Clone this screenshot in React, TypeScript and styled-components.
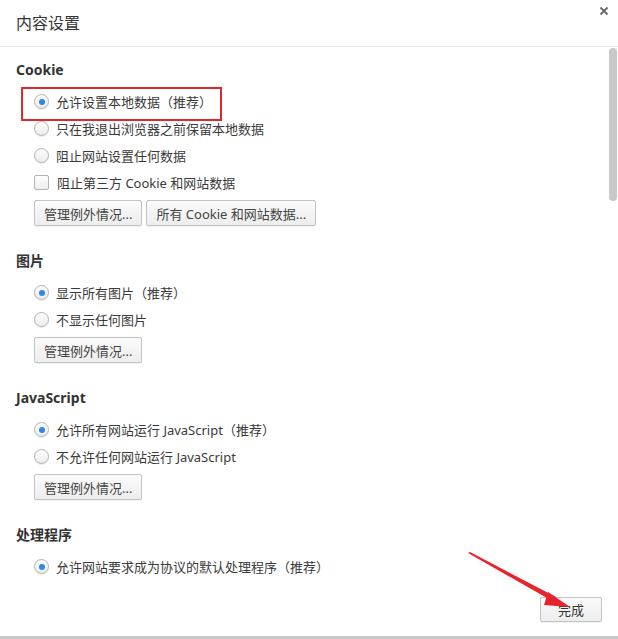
import React from "react";
import styled, { createGlobalStyle, css } from "styled-components";

const Global = createGlobalStyle`
  html, body { margin: 0; padding: 0; background: #fff; }
  body { font-family: "Noto Sans", "Noto Sans CJK SC", sans-serif; color: #333; }
  * { box-sizing: border-box; }
`;

const Dialog = styled.div`
  position: relative;
  width: 618px;
  height: 639px;
  display: flex;
  flex-direction: column;
  background: #fff;
  border-bottom: 3px solid #c9c9c9;
  overflow: hidden;
`;

const Header = styled.div`
  height: 47px;
  flex: none;
  display: flex;
  align-items: center;
  padding: 0 16px 2px;
  border-bottom: 1px solid #eaeaea;
`;

const Title = styled.h1`
  margin: 0;
  font-size: 16px;
  font-weight: 400;
  color: #333;
  font-family: "Noto Sans CJK SC", sans-serif;
`;

const Close = styled.button`
  position: absolute;
  top: 5px;
  right: 8px;
  width: 12px;
  height: 12px;
  padding: 0;
  border: none;
  background: none;
  display: flex;
  align-items: center;
  justify-content: center;
`;

const Body = styled.div`
  position: relative;
  flex: 1;
  overflow: hidden;
`;

const Content = styled.div`
  padding: 13px 16px 0;
  display: flex;
  flex-direction: column;
  gap: 25px;
`;

const Thumb = styled.div`
  position: absolute;
  top: 1px;
  right: 1px;
  width: 8px;
  height: 153px;
  border-radius: 4px;
  background: #c9c9c9;
`;

const Section = styled.section`
  display: flex;
  flex-direction: column;
`;

const Heading = styled.h2`
  margin: 0 0 8px;
  font-size: 14px;
  line-height: 20px;
  font-weight: 700;
  color: #333;
  font-family: "Noto Sans", "Noto Sans CJK SC", sans-serif;
`;

const Options = styled.div`
  display: flex;
  flex-direction: column;
  padding-left: 18px;
`;

const Option = styled.label<{ $highlight?: boolean }>`
  position: relative;
  height: 27px;
  display: flex;
  align-items: center;
  gap: 7px;
  font-size: 13px;
  color: #3a3a3a;
  font-family: "Noto Sans", "Noto Sans CJK SC", sans-serif;
  ${(p) =>
    p.$highlight &&
    css`
      &::after {
        content: "";
        position: absolute;
        left: -13px;
        top: -1px;
        width: 197px;
        height: 30px;
        border: 2px solid #e2272e;
      }
    `}
`;

const Radio = styled.span<{ $checked?: boolean }>`
  width: 15px;
  height: 15px;
  flex: none;
  border-radius: 50%;
  border: 1px solid #b3b3b3;
  background: linear-gradient(#fdfdfd, #ececec);
  box-shadow: 0 1px 1px rgba(0, 0, 0, 0.08);
  display: flex;
  align-items: center;
  justify-content: center;
  &::before {
    content: "";
    width: 6px;
    height: 6px;
    border-radius: 50%;
    background: ${(p) => (p.$checked ? "#2f86e8" : "transparent")};
  }
`;

const Check = styled.span`
  width: 15px;
  height: 15px;
  flex: none;
  border-radius: 2px;
  border: 1px solid #b3b3b3;
  background: linear-gradient(#fdfdfd, #efefef);
  margin-right: 1px;
`;

const Buttons = styled.div`
  display: flex;
  gap: 4px;
  margin-top: 4px;
`;

const Button = styled.button`
  height: 26px;
  padding: 0 9px;
  border: 1px solid #c3c3c3;
  border-radius: 2px;
  background: linear-gradient(#fbfbfb, #ededed);
  font-size: 13px;
  color: #444;
  font-family: "Noto Sans", "Noto Sans CJK SC", sans-serif;
  box-shadow: 0 1px 0 rgba(0, 0, 0, 0.05);
`;

const Footer = styled.div`
  flex: none;
  display: flex;
  justify-content: flex-end;
  padding: 0 16px 14px;
`;

const DoneButton = styled(Button)`
  height: 25px;
  width: 62px;
  padding: 0;
  color: #333;
`;

const Arrow = styled.svg`
  position: absolute;
  left: 466px;
  top: 550px;
  pointer-events: none;
`;

type Opt = { label: string; type: "radio" | "check"; checked?: boolean; highlight?: boolean };
type Sec = { title: string; options: Opt[]; buttons?: string[] };

const sections: Sec[] = [
  {
    title: "Cookie",
    options: [
      { label: "允许设置本地数据（推荐）", type: "radio", checked: true, highlight: true },
      { label: "只在我退出浏览器之前保留本地数据", type: "radio" },
      { label: "阻止网站设置任何数据", type: "radio" },
      { label: "阻止第三方 Cookie 和网站数据", type: "check" },
    ],
    buttons: ["管理例外情况...", "所有 Cookie 和网站数据..."],
  },
  {
    title: "图片",
    options: [
      { label: "显示所有图片（推荐）", type: "radio", checked: true },
      { label: "不显示任何图片", type: "radio" },
    ],
    buttons: ["管理例外情况..."],
  },
  {
    title: "JavaScript",
    options: [
      { label: "允许所有网站运行 JavaScript（推荐）", type: "radio", checked: true },
      { label: "不允许任何网站运行 JavaScript", type: "radio" },
    ],
    buttons: ["管理例外情况..."],
  },
  {
    title: "处理程序",
    options: [{ label: "允许网站要求成为协议的默认处理程序（推荐）", type: "radio", checked: true }],
  },
];

export default function App() {
  return (
    <Dialog>
      <Global />
      <Header>
        <Title>内容设置</Title>
      </Header>
      <Close aria-label="关闭">
        <svg width="10" height="10" viewBox="0 0 10 10">
          <path d="M1.5 1.5 L8.5 8.5 M8.5 1.5 L1.5 8.5" stroke="#6b6b6b" strokeWidth="2" />
        </svg>
      </Close>
      <Body>
        <Content>
          {sections.map((s) => (
            <Section key={s.title}>
              <Heading>{s.title}</Heading>
              <Options>
                {s.options.map((o) => (
                  <Option key={o.label} $highlight={o.highlight}>
                    {o.type === "radio" ? <Radio $checked={o.checked} /> : <Check />}
                    <span>{o.label}</span>
                  </Option>
                ))}
                {s.buttons && (
                  <Buttons>
                    {s.buttons.map((b) => (
                      <Button key={b}>{b}</Button>
                    ))}
                  </Buttons>
                )}
              </Options>
            </Section>
          ))}
        </Content>
        <Thumb />
      </Body>
      <Footer>
        <DoneButton>完成</DoneButton>
      </Footer>
      <Arrow width="110" height="64" viewBox="0 0 110 64">
        <polygon points="2,3 4,2 90,47 88,52" fill="#e8232b" />
        <polygon points="82,42 104,57 78,55" fill="#e8232b" />
      </Arrow>
    </Dialog>
  );
}
